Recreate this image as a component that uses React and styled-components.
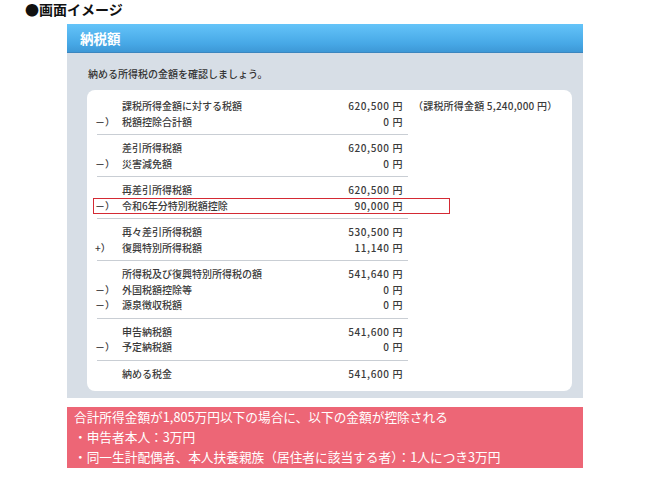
import styled, { createGlobalStyle } from "styled-components";

const groups = [
  [
    ["", "課税所得金額に対する税額", "620,500 円", "（課税所得金額 5,240,000 円）"],
    ["－）", "税額控除合計額", "0 円"],
  ],
  [
    ["", "差引所得税額", "620,500 円"],
    ["－）", "災害減免額", "0 円"],
  ],
  [
    ["", "再差引所得税額", "620,500 円"],
    ["－）", "令和6年分特別税額控除", "90,000 円", null, true],
  ],
  [
    ["", "再々差引所得税額", "530,500 円"],
    ["+）", "復興特別所得税額", "11,140 円"],
  ],
  [
    ["", "所得税及び復興特別所得税の額", "541,640 円"],
    ["－）", "外国税額控除等", "0 円"],
    ["－）", "源泉徴収税額", "0 円"],
  ],
  [
    ["", "申告納税額", "541,600 円"],
    ["－）", "予定納税額", "0 円"],
  ],
  [["", "納める税金", "541,600 円"]],
];

const notes = [
  "合計所得金額が1,805万円以下の場合に、以下の金額が控除される",
  "・申告者本人：3万円",
  "・同一生計配偶者、本人扶養親族（居住者に該当する者）：1人につき3万円",
];

export default function App() {
  return (
    <>
      <Global />
      <Title>●画面イメージ</Title>
      <Panel>
        <PanelHead>納税額</PanelHead>
        <PanelBody>
          <Lead>納める所得税の金額を確認しましょう。</Lead>
          <Card>
            <Groups>
              {groups.map((rows, i) => (
                <Group key={i}>
                  {rows.map(([sign, label, amount, , marked]) => (
                    <Row key={label} $marked={marked}>
                      <Sign>{sign}</Sign>
                      <span>{label}</span>
                      <Amount>{amount}</Amount>
                    </Row>
                  ))}
                </Group>
              ))}
            </Groups>
            <Aside>{groups[0][0][3]}</Aside>
          </Card>
        </PanelBody>
      </Panel>
      <Note>
        {notes.map((line) => (
          <div key={line}>{line}</div>
        ))}
      </Note>
    </>
  );
}

const Global = createGlobalStyle`
  body{margin:0;background:#fff;font-family:"Noto Sans CJK JP","Noto Sans",sans-serif;}
`;
const Title = styled.h1`margin:0;padding:1px 0 0 25px;height:23px;font-size:14px;line-height:17px;font-weight:700;color:#111;`;
const Panel = styled.section`width:516px;margin:0 0 0 67px;background:#d7dee6;`;
const PanelHead = styled.div`
  height:28px;padding-left:13px;border-bottom:1px solid #3b86bf;
  background:linear-gradient(#64c4f9,#47a8e6 70%,#3d98d6);
  color:#fff;font-size:13.5px;font-weight:700;line-height:28px;
`;
const PanelBody = styled.div`padding:13px 11px 7px 20px;`;
const Lead = styled.p`margin:0 0 8px 1px;color:#333;font-size:10px;font-weight:500;line-height:16px;`;
const Card = styled.div`display:flex;align-items:flex-start;min-height:301px;padding:0 0 0 10px;background:#fff;border-radius:8px;box-sizing:border-box;`;
const Groups = styled.div`width:311px;padding:3px 0 4px;`;
const Group = styled.div`
  padding:5px 0;border-bottom:1px solid #c9ced4;
  &:last-child{border-bottom:none;}
`;
const Row = styled.div`
  position:relative;display:grid;grid-template-columns:25px 1fr auto;padding-right:5px;
  color:#3a3a3a;font-size:10px;font-weight:500;line-height:15.5px;
  ${(p) => p.$marked && `&::after{content:"";position:absolute;left:-4px;top:0;width:357px;height:16px;border:1.5px solid #d42a34;box-sizing:border-box;}`}
`;
const Sign = styled.span`margin-left:-2px;`;
const Amount = styled.span`text-align:right;letter-spacing:0.6px;`;
const Aside = styled.div`padding:8px 0 0 5px;color:#3a3a3a;font-size:10px;font-weight:500;line-height:15.5px;letter-spacing:0.2px;`;
const Note = styled.div`
  width:516px;margin:9px 0 0 67px;padding:0 7px 1px;box-sizing:border-box;
  background:#ed6676;color:#fff;font-size:12.7px;line-height:20px;
`;
